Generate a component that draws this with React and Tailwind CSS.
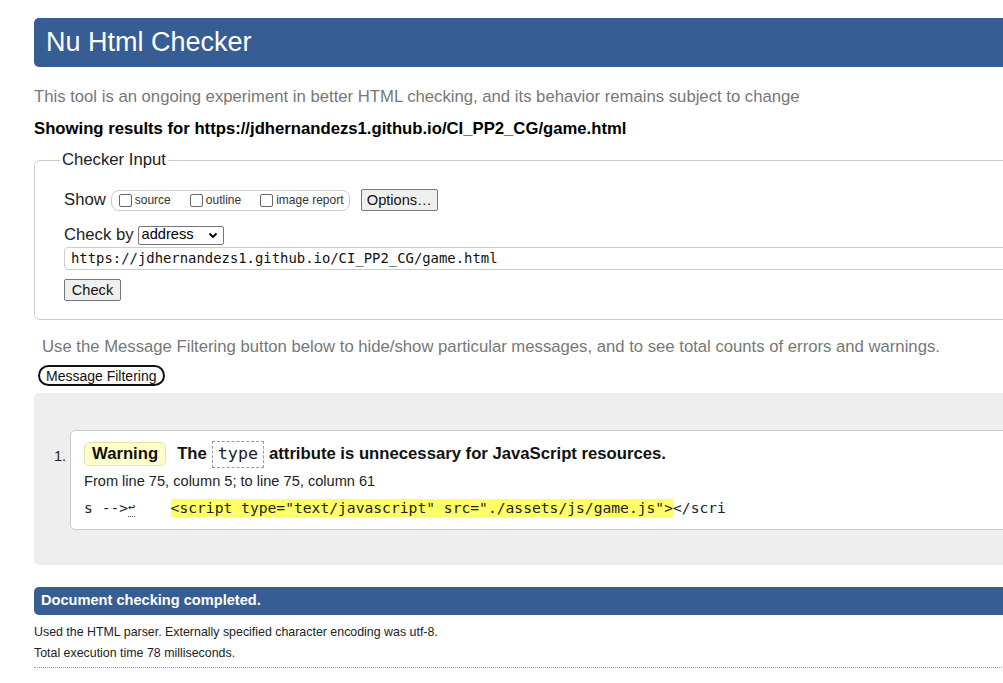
import React from "react";

const sans = { fontFamily: '"Liberation Sans", Arial, sans-serif' };
const mono = { fontFamily: '"DejaVu Sans Mono", monospace' };

function Check({ label }) {
  return (
    <label className="flex items-center gap-[3px] text-[12px] text-[#333]">
      <span className="inline-block w-[13px] h-[13px] border border-[#666] rounded-[2px] bg-white" />
      <span>{label}</span>
    </label>
  );
}

export default function App() {
  return (
    <div
      className="w-[1003px] h-[683px] overflow-hidden bg-white text-[#000]"
      style={sans}
    >
      <div className="w-[1100px] pl-[34px] pt-[18px]">
        {/* Header */}
        <div className="h-[49px] bg-[#375d95] rounded-l-[5px] flex items-center pl-[12px]">
          <h1 className="text-[27px] text-white font-normal">Nu Html Checker</h1>
        </div>

        <p className="mt-[20px] text-[16.7px] leading-[20px] text-[#777]">
          This tool is an ongoing experiment in better HTML checking, and its behavior remains subject to change
        </p>
        <p className="mt-[12px] text-[16.7px] leading-[20px] font-bold">
          Showing results for https://jdhernandezs1.github.io/CI_PP2_CG/game.html
        </p>

        {/* Checker input */}
        <fieldset className="mt-[11px] h-[170px] border border-[#ccc] rounded-[6px] pl-[29px] pr-0">
          <legend className="ml-[-4px] px-[2px] text-[16.7px] leading-[20px] text-[#222]">Checker Input</legend>
          <div className="flex items-center h-[24px] mt-[18px]">
            <span className="text-[16.7px] text-[#222] mr-[5px]">Show</span>
            <div className="flex items-center h-[21px] w-[239px] border border-[#ccc] rounded-[8px] pl-[7px] gap-[19px]">
              <Check label="source" />
              <Check label="outline" />
              <Check label="image report" />
            </div>
            <button className="ml-[11px] h-[22px] w-[77px] bg-[#efefef] border border-[#767676] rounded-[2px] text-[14.6px] text-[#111]">
              Options…
            </button>
          </div>
          <div className="flex items-center h-[22px] mt-[12px]">
            <span className="text-[16.7px] text-[#222] mr-[4px]">Check by</span>
            <div className="flex items-center justify-between h-[19px] w-[86px] border border-[#767676] rounded-[2px] pl-[3px] pr-[5px] text-[14.6px] text-[#000]">
              <span>address</span>
              <svg width="10" height="8" viewBox="0 0 10 8">
                <path d="M1.5 2.5 L5 6 L8.5 2.5" fill="none" stroke="#000" strokeWidth="1.8" />
              </svg>
            </div>
          </div>
          <div className="h-[23px] mt-[1px] border border-[#ccc] rounded-l-[4px] flex items-center pl-[6px] text-[13.9px] text-[#111]" style={mono}>
            https://jdhernandezs1.github.io/CI_PP2_CG/game.html
          </div>
          <button className="mt-[9px] h-[22px] w-[57px] bg-[#efefef] border border-[#767676] rounded-[2px] text-[14.6px] text-[#111]">
            Check
          </button>
        </fieldset>

        <p className="mt-[17px] ml-[8px] text-[16.7px] leading-[20px] text-[#777]">
          Use the Message Filtering button below to hide/show particular messages, and to see total counts of errors and warnings.
        </p>
        <button className="mt-[8px] ml-[4px] h-[21px] px-[6px] border-2 border-[#111] rounded-full text-[14px] leading-[16px] text-[#111]">
          Message Filtering
        </button>

        {/* Results */}
        <div className="mt-[5px] h-[172px] bg-[#eee] rounded-l-[5px] pt-[37px] pl-[36px]">
          <div className="relative h-[100px] bg-white border border-[#ccc] rounded-l-[5px] pl-[13px] pt-[10px]">
            <span className="absolute left-[-17px] top-[15px] text-[14.6px] text-[#222]">1.</span>
            <div className="flex items-center h-[27px]">
              <span className="h-[24px] px-[7px] flex items-center bg-[#ffffcc] border border-[#e3e3b0] rounded-[5px] text-[16.7px] font-bold text-[#111]">
                Warning
              </span>
              <span className="ml-[11px] text-[16.7px] font-bold text-[#111]">The</span>
              <span className="ml-[5px] h-[27px] px-[5px] flex items-center border border-dashed border-[#999] text-[16.7px] text-[#222]" style={mono}>
                type
              </span>
              <span className="ml-[5px] text-[16.7px] font-bold text-[#111]">attribute is unnecessary for JavaScript resources.</span>
            </div>
            <p className="mt-[5px] text-[14.6px] leading-[16px] text-[#222]">From line 75, column 5; to line 75, column 61</p>
            <div className="mt-[10px] text-[14.65px] leading-[18px] text-[#222] whitespace-pre flex" style={mono}>
              <span>{"s -->"}</span>
              <span className="border-b border-dotted border-[#555] text-[12px] leading-[16px]">↩</span>
              <span>{"    "}</span>
              <span className="bg-[#ffff66]">{'<script type="text/javascript" src="./assets/js/game.js">'}</span>
              <span>{"</scri"}</span>
            </div>
          </div>
        </div>

        {/* Footer */}
        <div className="mt-[22px] h-[28px] bg-[#375d95] rounded-l-[5px] flex items-center pl-[7px]">
          <span className="text-[14.6px] font-bold text-white">Document checking completed.</span>
        </div>
        <p className="mt-[10px] text-[12.4px] leading-[14px] text-[#222]">
          Used the HTML parser. Externally specified character encoding was utf-8.
        </p>
        <p className="mt-[7px] text-[12.4px] leading-[14px] text-[#222]">Total execution time 78 milliseconds.</p>
        <div className="mt-[7px] border-t border-dotted border-[#999]" />
      </div>
    </div>
  );
}
